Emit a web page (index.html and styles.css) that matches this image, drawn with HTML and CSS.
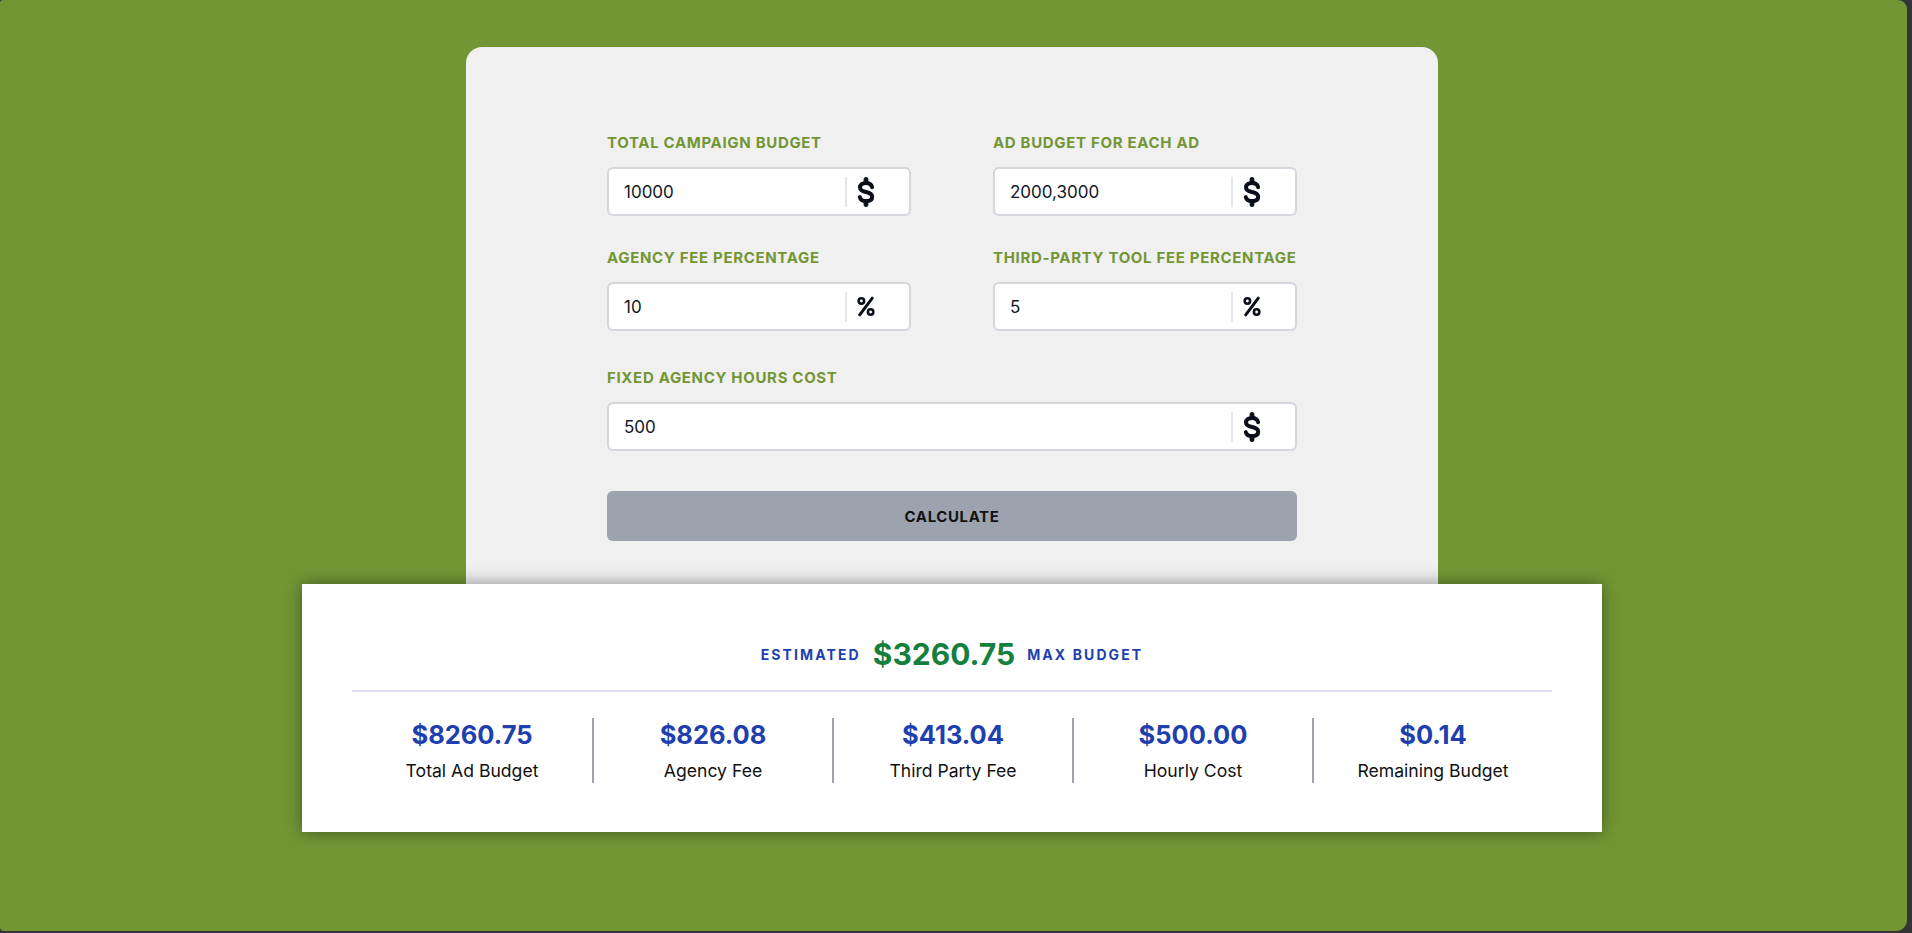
FILE: index.html
```html
<!DOCTYPE html>
<html lang="en">
<head>
<meta charset="utf-8">
<title>Ad Budget Calculator</title>
<link rel="stylesheet" href="styles.css">
</head>
<body>
<div class="screen">
  <div class="card">
    <div class="grid">
      <div class="field">
        <label class="field-label">Total Campaign Budget</label>
        <div class="field-box">
          <input class="field-input" type="text" value="10000">
          <span class="addon">
            <svg class="ico-dollar" viewBox="0 0 18 30" width="18" height="30"><rect x="7.1" y="0.5" width="3.8" height="6" rx="1.6"/><rect x="7.1" y="23.5" width="3.8" height="6" rx="1.6"/><path d="M15.1 10.2 C14.5 7.4 12.3 5.9 9.1 5.9 C5.4 5.9 3 7.7 3 10.4 C3 13.4 5.8 14.2 9 15 C12.4 15.8 15.2 16.9 15.2 19.8 C15.2 22.6 12.7 24.1 9 24.1 C5.8 24.1 3.4 22.8 2.8 20.1" fill="none" stroke-width="4" stroke-linecap="round"/></svg>
          </span>
        </div>
      </div>
      <div class="field">
        <label class="field-label">Ad Budget for Each Ad</label>
        <div class="field-box">
          <input class="field-input" type="text" value="2000,3000">
          <span class="addon">
            <svg class="ico-dollar" viewBox="0 0 18 30" width="18" height="30"><rect x="7.1" y="0.5" width="3.8" height="6" rx="1.6"/><rect x="7.1" y="23.5" width="3.8" height="6" rx="1.6"/><path d="M15.1 10.2 C14.5 7.4 12.3 5.9 9.1 5.9 C5.4 5.9 3 7.7 3 10.4 C3 13.4 5.8 14.2 9 15 C12.4 15.8 15.2 16.9 15.2 19.8 C15.2 22.6 12.7 24.1 9 24.1 C5.8 24.1 3.4 22.8 2.8 20.1" fill="none" stroke-width="4" stroke-linecap="round"/></svg>
          </span>
        </div>
      </div>
      <div class="field">
        <label class="field-label">Agency Fee Percentage</label>
        <div class="field-box">
          <input class="field-input" type="text" value="10">
          <span class="addon">
            <svg class="ico-pct" viewBox="0 0 18 21" width="18" height="21"><line x1="15.3" y1="2.2" x2="2.7" y2="18.8" stroke-width="3" stroke-linecap="round"/><circle cx="4.4" cy="5" r="2.7" fill="none" stroke-width="2.6"/><circle cx="13.6" cy="16" r="2.7" fill="none" stroke-width="2.6"/></svg>
          </span>
        </div>
      </div>
      <div class="field">
        <label class="field-label">Third-Party Tool Fee Percentage</label>
        <div class="field-box">
          <input class="field-input" type="text" value="5">
          <span class="addon">
            <svg class="ico-pct" viewBox="0 0 18 21" width="18" height="21"><line x1="15.3" y1="2.2" x2="2.7" y2="18.8" stroke-width="3" stroke-linecap="round"/><circle cx="4.4" cy="5" r="2.7" fill="none" stroke-width="2.6"/><circle cx="13.6" cy="16" r="2.7" fill="none" stroke-width="2.6"/></svg>
          </span>
        </div>
      </div>
    </div>
    <div class="field field-full">
      <label class="field-label">Fixed Agency Hours Cost</label>
      <div class="field-box">
        <input class="field-input" type="text" value="500">
        <span class="addon">
          <svg class="ico-dollar" viewBox="0 0 18 30" width="18" height="30"><rect x="7.1" y="0.5" width="3.8" height="6" rx="1.6"/><rect x="7.1" y="23.5" width="3.8" height="6" rx="1.6"/><path d="M15.1 10.2 C14.5 7.4 12.3 5.9 9.1 5.9 C5.4 5.9 3 7.7 3 10.4 C3 13.4 5.8 14.2 9 15 C12.4 15.8 15.2 16.9 15.2 19.8 C15.2 22.6 12.7 24.1 9 24.1 C5.8 24.1 3.4 22.8 2.8 20.1" fill="none" stroke-width="4" stroke-linecap="round"/></svg>
        </span>
      </div>
    </div>
    <button class="btn" type="button">Calculate</button>
  </div>
  <div class="results">
    <div class="headline">
      <span class="tag">Estimated</span>
      <span class="big">$3260.75</span>
      <span class="tag">Max Budget</span>
    </div>
    <div class="divider"></div>
    <div class="stats">
      <div class="stat"><div class="stat-value">$8260.75</div><div class="stat-label">Total Ad Budget</div></div>
      <div class="stat"><div class="stat-value">$826.08</div><div class="stat-label">Agency Fee</div></div>
      <div class="stat"><div class="stat-value">$413.04</div><div class="stat-label">Third Party Fee</div></div>
      <div class="stat"><div class="stat-value">$500.00</div><div class="stat-label">Hourly Cost</div></div>
      <div class="stat"><div class="stat-value">$0.14</div><div class="stat-label">Remaining Budget</div></div>
    </div>
  </div>
</div>
</body>
</html>
```
FILE: styles.css
```css
* { box-sizing: border-box; }
html, body { margin: 0; padding: 0; }
body {
  background: #343434;
  font-family: Inter, "Noto Sans", sans-serif;
  width: 1912px;
  height: 933px;
  overflow: hidden;
}
.screen {
  width: 1907px;
  height: 931px;
  background: #739635;
  border-radius: 3px 9px 11px 4px;
  padding-top: 47px;
  padding-right: 3px;
  display: flex;
  flex-direction: column;
  align-items: center;
}
.card {
  width: 972px;
  background: #f0f0f0;
  border-radius: 16px 16px 0 0;
  padding: 86px 141px 43px;
}
.grid {
  display: grid;
  grid-template-columns: minmax(0, 1fr) minmax(0, 1fr);
  column-gap: 82px;
  row-gap: 32px;
}
.field { min-width: 0; }
.field-label {
  display: block;
  font-size: 15px;
  line-height: 20px;
  font-weight: 700;
  letter-spacing: 0.045em;
  text-transform: uppercase;
  white-space: nowrap;
  color: #739635;
  margin-bottom: 14px;
}
.field-full { margin-top: 37px; }
.field-box {
  display: flex;
  align-items: center;
  height: 49px;
  background: #fff;
  border: 2px solid #d3d6dd;
  border-radius: 6px;
}
.field-input {
  flex: 1 1 0;
  width: 0;
  min-width: 0;
  height: 100%;
  border: 0;
  outline: none;
  background: transparent;
  padding: 0 0 0 15px;
  font-family: Inter, "Noto Sans", sans-serif;
  font-size: 17px;
  color: #111827;
}
.addon {
  flex: 0 0 64px;
  height: 30px;
  border-left: 2px solid #e3e6eb;
  padding-left: 10px;
  display: flex;
  align-items: center;
}
.addon svg { fill: #0b0f1a; stroke: #0b0f1a; display: block; }
.btn {
  display: block;
  width: 100%;
  height: 50px;
  margin-top: 40px;
  border: 0;
  border-radius: 6px;
  background: #9ca3af;
  font-family: Inter, "Noto Sans", sans-serif;
  font-size: 15px;
  font-weight: 700;
  letter-spacing: 0.04em;
  text-transform: uppercase;
  color: #111;
}
.results {
  width: 1300px;
  background: #fff;
  padding: 50px 50px 49px;
  box-shadow: 0 0 16px rgba(0, 0, 0, 0.42);
  position: relative;
}
.headline {
  height: 40px;
  display: flex;
  align-items: center;
  justify-content: center;
  gap: 12px;
}
.tag {
  font-size: 14px;
  font-weight: 700;
  letter-spacing: 0.15em;
  text-transform: uppercase;
  color: #1e40af;
}
.big {
  font-size: 30px;
  font-weight: 700;
  color: #15803d;
}
.divider {
  height: 2px;
  background: #e0e4f1;
  margin: 16px 0 26px;
}
.stats {
  display: grid;
  grid-template-columns: repeat(5, 1fr);
}
.stat {
  height: 65px;
  text-align: center;
}
.stat + .stat { border-left: 2px solid #9ca3af; }
.stat-value {
  font-size: 25.5px;
  line-height: 33px;
  font-weight: 700;
  color: #1e40af;
}
.stat-label {
  margin-top: 8px;
  font-size: 17.6px;
  line-height: 24px;
  color: #111;
}
```
